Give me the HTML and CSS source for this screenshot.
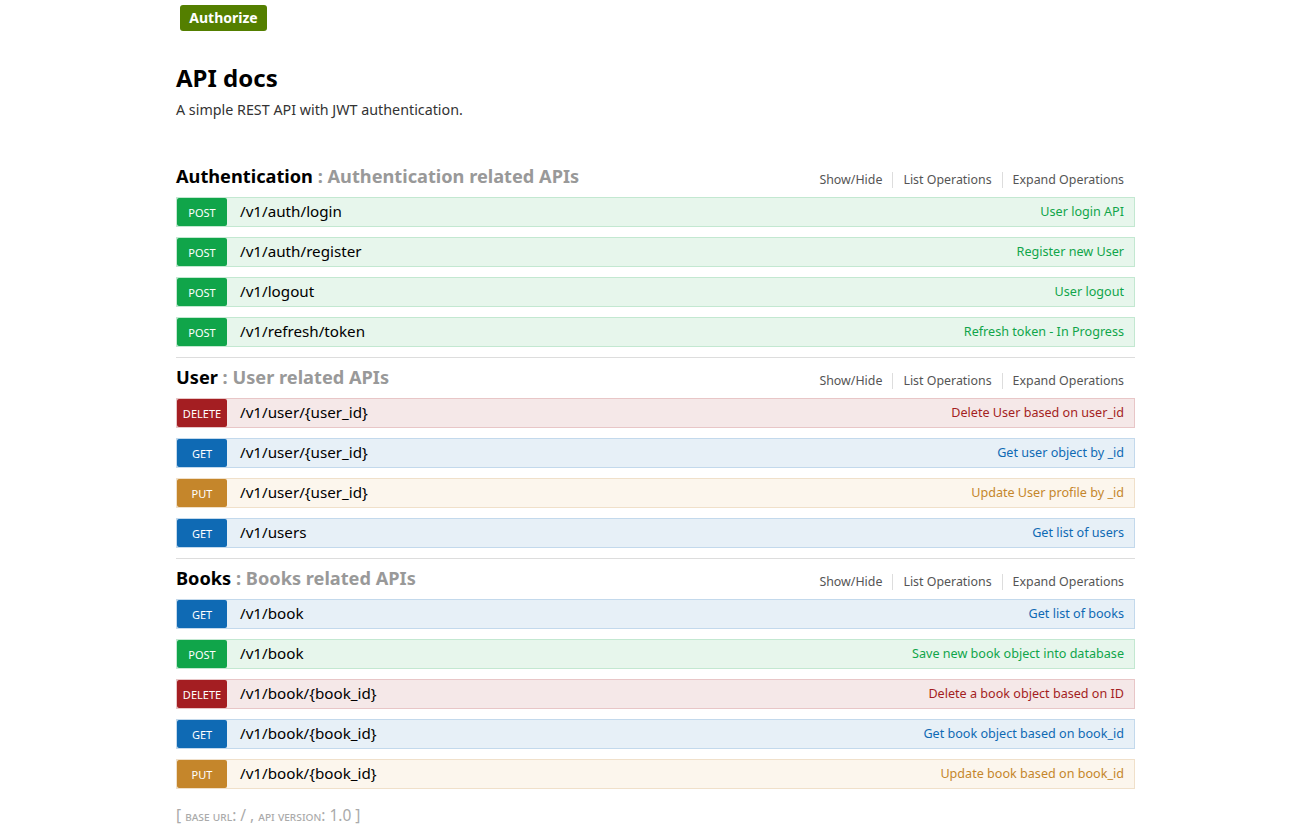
FILE: index.html
```html
<!DOCTYPE html>
<html>
<head>
<meta charset="utf-8">
<link rel="stylesheet" href="styles.css">
</head>
<body>
<div class="wrap">
  <div class="topbar"><button class="authorize">Authorize</button></div>
  <div class="info">
    <h1>API docs</h1>
    <p>A simple REST API with JWT authentication.</p>
  </div>

  <div class="resource">
    <div class="res-head">
      <h2>Authentication <span class="res-desc">: Authentication related APIs</span></h2>
      <ul class="options"><li>Show/Hide</li><li>List Operations</li><li>Expand Operations</li></ul>
    </div>
    <ul class="ops">
      <li class="op post"><span class="method">POST</span><span class="path">/v1/auth/login</span><span class="summary">User login API</span></li>
      <li class="op post"><span class="method">POST</span><span class="path">/v1/auth/register</span><span class="summary">Register new User</span></li>
      <li class="op post"><span class="method">POST</span><span class="path">/v1/logout</span><span class="summary">User logout</span></li>
      <li class="op post"><span class="method">POST</span><span class="path">/v1/refresh/token</span><span class="summary">Refresh token - In Progress</span></li>
    </ul>
  </div>

  <div class="resource">
    <div class="res-head">
      <h2>User <span class="res-desc">: User related APIs</span></h2>
      <ul class="options"><li>Show/Hide</li><li>List Operations</li><li>Expand Operations</li></ul>
    </div>
    <ul class="ops">
      <li class="op delete"><span class="method">DELETE</span><span class="path">/v1/user/{user_id}</span><span class="summary">Delete User based on user_id</span></li>
      <li class="op get"><span class="method">GET</span><span class="path">/v1/user/{user_id}</span><span class="summary">Get user object by _id</span></li>
      <li class="op put"><span class="method">PUT</span><span class="path">/v1/user/{user_id}</span><span class="summary">Update User profile by _id</span></li>
      <li class="op get"><span class="method">GET</span><span class="path">/v1/users</span><span class="summary">Get list of users</span></li>
    </ul>
  </div>

  <div class="resource last">
    <div class="res-head">
      <h2>Books <span class="res-desc">: Books related APIs</span></h2>
      <ul class="options"><li>Show/Hide</li><li>List Operations</li><li>Expand Operations</li></ul>
    </div>
    <ul class="ops">
      <li class="op get"><span class="method">GET</span><span class="path">/v1/book</span><span class="summary">Get list of books</span></li>
      <li class="op post"><span class="method">POST</span><span class="path">/v1/book</span><span class="summary">Save new book object into database</span></li>
      <li class="op delete"><span class="method">DELETE</span><span class="path">/v1/book/{book_id}</span><span class="summary">Delete a book object based on ID</span></li>
      <li class="op get"><span class="method">GET</span><span class="path">/v1/book/{book_id}</span><span class="summary">Get book object based on book_id</span></li>
      <li class="op put"><span class="method">PUT</span><span class="path">/v1/book/{book_id}</span><span class="summary">Update book based on book_id</span></li>
    </ul>
  </div>

  <div class="footer">[ <span class="sc">base url</span>: / , <span class="sc">api version</span>: 1.0 ]</div>
</div>
</body>
</html>
```

FILE: styles.css
```css
* { box-sizing: border-box; }
html, body { margin: 0; padding: 0; background: #fff; }
body { font-family: "Noto Sans", "Open Sans", sans-serif; color: #000; }

.wrap { width: 960px; margin: 0 auto; padding-left: 1px; }

.topbar { height: 36px; padding-top: 5px; padding-left: 4px; }
.authorize {
  display: block; height: 26px; width: 87px; padding: 0;
  background: #547f00; color: #fff; border: none; border-radius: 3px;
  font-family: inherit; font-weight: bold; font-size: 14px; line-height: 26px;
}

.info { padding-top: 28px; height: 121px; }
.info h1 { margin: 0; font-size: 24px; font-weight: bold; line-height: 28px; }
.info p { margin: 9px 0 0; font-size: 14.3px; color: #333; line-height: 18px; }

.resource { border-bottom: 1px solid #ddd; }
.resource.last { border-bottom: none; }
.res-head { display: flex; justify-content: space-between; align-items: center; height: 40px; }
.res-head h2 { margin: 0; font-size: 18.2px; font-weight: bold; line-height: 24px; position: relative; top: -1px; }
.res-desc { color: #999; }
.options { list-style: none; margin: 0 11px 0 0; padding: 0; display: flex; font-size: 12.4px; color: #555; position: relative; top: 3px; }
.options li { padding: 0 10px; border-right: 1px solid #ddd; line-height: 16px; }
.options li:last-child { border-right: none; padding-right: 0; }

.ops { list-style: none; margin: 0; padding: 0 0 10px; }
.op {
  display: flex; align-items: center; height: 30px; margin-bottom: 10px;
  border: 1px solid; padding: 0 10px 0 0;
}
.op:last-child { margin-bottom: 0; }
.method {
  width: 50px; height: 28px; border-radius: 2px; color: #fff;
  font-size: 11px; text-align: center; line-height: 30px; flex: none;
}
.path { font-size: 15.2px; padding-left: 13px; flex: 1; line-height: 20px; position: relative; top: -1px; }
.summary { font-size: 12.6px; position: relative; top: -1px; }

.post { background: #e7f6ec; border-color: #c3e8d1; }
.post .method { background: #10a54a; }
.post .summary { color: #10a54a; }
.get { background: #e7f0f7; border-color: #c3d9ec; }
.get .method { background: #0f6ab4; }
.get .summary { color: #0f6ab4; }
.delete { background: #f5e8e8; border-color: #e8c6c7; }
.delete .method { background: #a41e22; }
.delete .summary { color: #a41e22; }
.put { background: #fcf6ed; border-color: #f0e0ca; }
.put .method { background: #c5862b; }
.put .summary { color: #c5862b; }

.footer { padding-top: 17px; font-size: 15.5px; line-height: 20px; color: #aaa; position: relative; top: -11px; }
.sc { font-variant: small-caps; font-size: 12.5px; }
```
